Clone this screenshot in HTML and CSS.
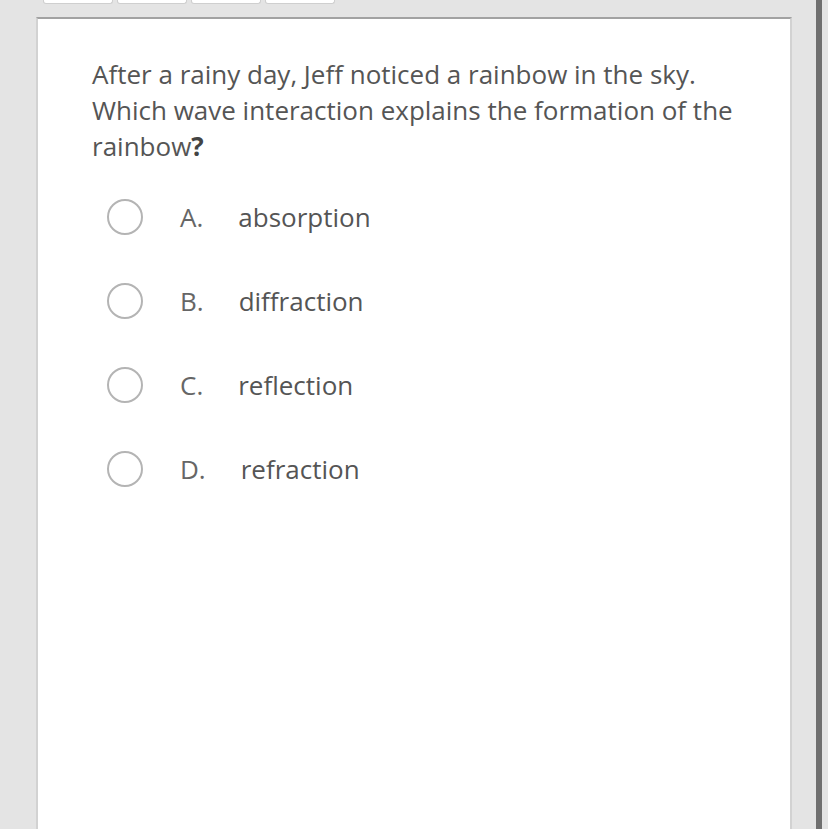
FILE: index.html
```html
<!DOCTYPE html>
<html>
<head>
<meta charset="utf-8">
<link rel="stylesheet" href="styles.css">
</head>
<body>
<div class="page">
  <div class="main">
    <div class="tabs">
      <div class="tab"></div>
      <div class="tab"></div>
      <div class="tab"></div>
      <div class="tab"></div>
    </div>
    <div class="card">
      <p class="question">After a rainy day, Jeff noticed a rainbow in the sky. Which wave interaction explains the formation of the rainbow<b>?</b></p>
      <ul class="options">
        <li class="option"><span class="radio"></span><span class="letter">A.</span><span class="answer">absorption</span></li>
        <li class="option"><span class="radio"></span><span class="letter">B.</span><span class="answer">diffraction</span></li>
        <li class="option"><span class="radio"></span><span class="letter">C.</span><span class="answer">reflection</span></li>
        <li class="option"><span class="radio"></span><span class="letter">D.</span><span class="answer">refraction</span></li>
      </ul>
    </div>
  </div>
  <div class="scrollbar"></div>
</div>
</body>
</html>
```

FILE: styles.css
```css
html, body {
  margin: 0;
  padding: 0;
  height: 100%;
  background: #e4e4e4;
  overflow: hidden;
}
.page {
  display: flex;
  height: 829px;
}
.main {
  width: 792px;
  display: flex;
  flex-direction: column;
}
.tabs {
  display: flex;
  gap: 4px;
  margin-left: 43px;
  height: 4px;
}
.tab {
  width: 68px;
  height: 3px;
  background: #fff;
  border: 1px solid #cfcfcf;
  border-top: none;
  border-radius: 0 0 3px 3px;
}
.card {
  margin-top: 13px;
  margin-left: 36px;
  flex: 1;
  background: #fff;
  border-top: 2px solid #a2a2a2;
  border-left: 2px solid #d2d2d2;
  border-right: 2px solid #d2d2d2;
  padding: 37px 42px 0 54px;
  font-family: "Open Sans", "Noto Sans", sans-serif;
  color: #555;
}
.question {
  margin: 0;
  font-size: 26px;
  line-height: 36px;
}
.question b {
  font-weight: 700;
  color: #444;
}
.options {
  list-style: none;
  margin: 35px 0 0 15px;
  padding: 0;
  display: flex;
  flex-direction: column;
  gap: 48px;
}
.option {
  display: flex;
  align-items: center;
  height: 36px;
  font-size: 26px;
}
.radio {
  width: 32px;
  height: 32px;
  border: 2px solid #b4b4b4;
  border-radius: 50%;
  flex: none;
}
.letter {
  margin-left: 37px;
  color: #666;
}
.answer {
  margin-left: 35px;
  color: #555;
}
.scrollbar {
  margin-left: 24px;
  width: 6px;
  background: #6f6f6f;
}
```
